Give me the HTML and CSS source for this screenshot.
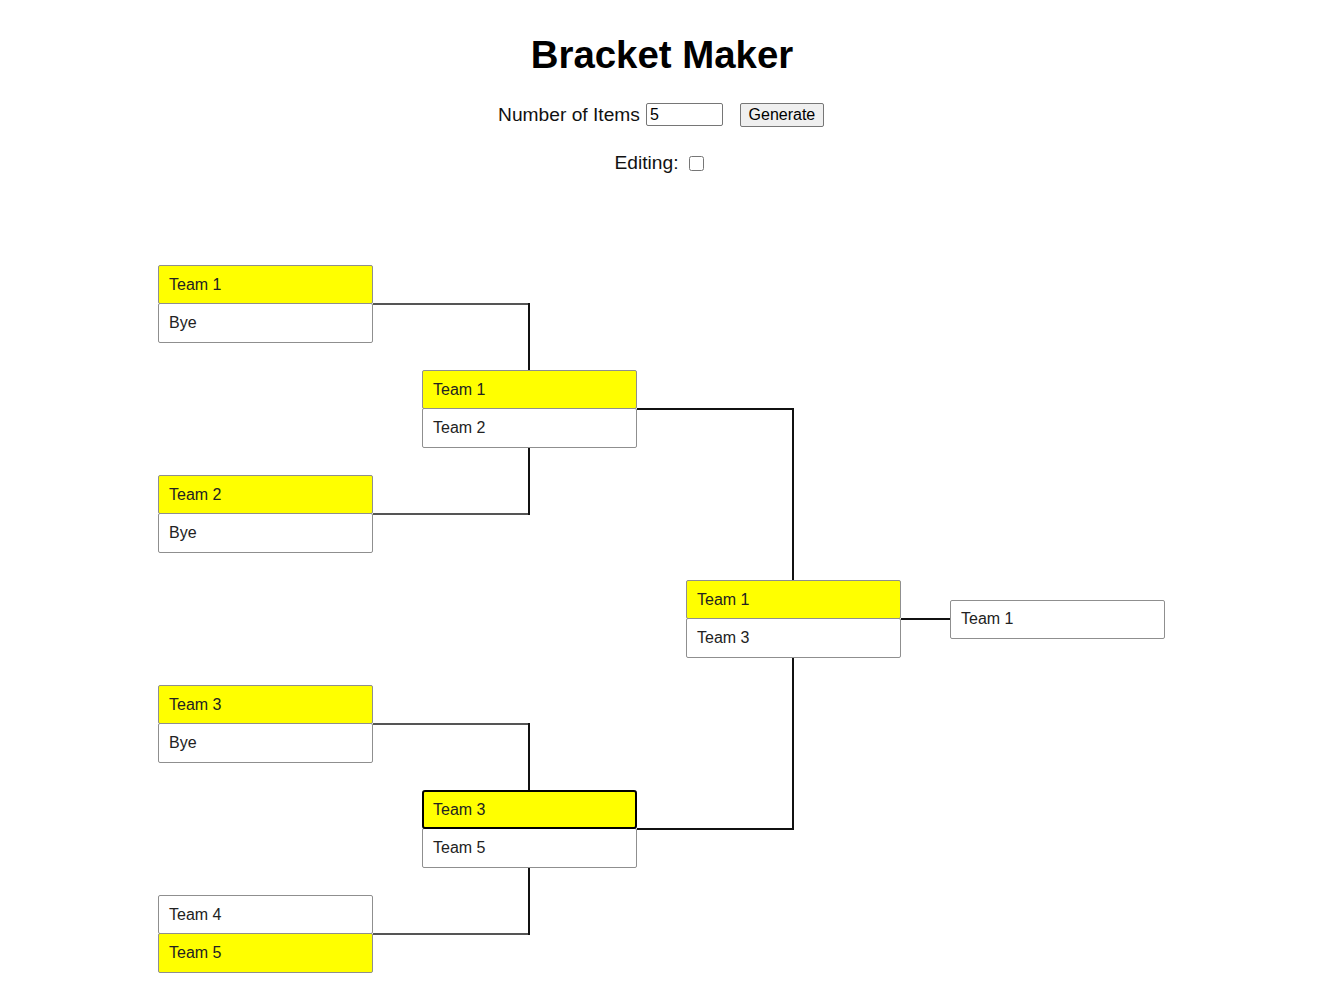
FILE: index.html
```html
<!DOCTYPE html>
<html lang="en">
<head>
<meta charset="utf-8">
<title>Bracket Maker</title>
<link rel="stylesheet" href="styles.css">
</head>
<body>
<header class="header">
  <h1 class="title">Bracket Maker</h1>
  <div class="controls">
    <label class="count-label">Number of Items <input class="count-input" type="text" value="5"></label>
    <button class="generate">Generate</button>
  </div>
  <div class="editing">
    <span>Editing:</span>
    <input class="edit-check" type="checkbox">
  </div>
</header>

<section class="bracket">
  <svg class="lines" width="1318" height="840" viewBox="0 0 1318 840">
    <g stroke="#555" stroke-width="2" fill="none" shape-rendering="crispEdges">
      <line x1="373" y1="105" x2="530" y2="105"/>
      <line x1="373" y1="315" x2="530" y2="315"/>
      <line x1="373" y1="525" x2="530" y2="525"/>
      <line x1="373" y1="735" x2="530" y2="735"/>
    </g>
    <g stroke="#111" stroke-width="2" fill="none" shape-rendering="crispEdges">
      <line x1="529" y1="104" x2="529" y2="171"/>
      <line x1="529" y1="249" x2="529" y2="316"/>
      <line x1="529" y1="524" x2="529" y2="591"/>
      <line x1="529" y1="669" x2="529" y2="736"/>
      <path d="M637 210 H793 V381"/>
      <path d="M637 630 H793 V459"/>
      <line x1="901" y1="420" x2="950" y2="420"/>
    </g>
  </svg>

  <div class="column round-1">
    <div class="cell">
      <div class="match">
        <div class="slot win">Team 1</div>
        <div class="slot">Bye</div>
      </div>
    </div>
    <div class="cell">
      <div class="match">
        <div class="slot win">Team 2</div>
        <div class="slot">Bye</div>
      </div>
    </div>
    <div class="cell">
      <div class="match">
        <div class="slot win">Team 3</div>
        <div class="slot">Bye</div>
      </div>
    </div>
    <div class="cell">
      <div class="match">
        <div class="slot">Team 4</div>
        <div class="slot win">Team 5</div>
      </div>
    </div>
  </div>

  <div class="column round-2">
    <div class="cell">
      <div class="match">
        <div class="slot win">Team 1</div>
        <div class="slot">Team 2</div>
      </div>
    </div>
    <div class="cell">
      <div class="match">
        <div class="slot win focused">Team 3</div>
        <div class="slot">Team 5</div>
      </div>
    </div>
  </div>

  <div class="column round-3">
    <div class="cell">
      <div class="match">
        <div class="slot win">Team 1</div>
        <div class="slot">Team 3</div>
      </div>
    </div>
  </div>

  <div class="column champion">
    <div class="cell">
      <div class="slot single">Team 1</div>
    </div>
  </div>
</section>
</body>
</html>
```
FILE: styles.css
```css
* {
  box-sizing: border-box;
}

html, body {
  margin: 0;
  padding: 0;
  background: #ffffff;
}

body {
  font-family: "Liberation Sans", Arial, sans-serif;
  font-size: 19.2px;
  color: #111;
  width: 1318px;
  height: 989px;
  overflow: hidden;
}

.header {
  display: flex;
  flex-direction: column;
  align-items: center;
  padding-top: 33px;
  padding-left: 6px;
}

.title {
  margin: 0;
  font-size: 38.4px;
  line-height: 44px;
  font-weight: 700;
  color: #000;
}

.controls {
  margin-top: 26px;
  display: flex;
  align-items: center;
  height: 23px;
  padding-right: 2px;
}

.count-label {
  display: flex;
  align-items: center;
  gap: 6px;
  color: #111;
}

.count-input {
  width: 77px;
  height: 23px;
  border: 1px solid #767676;
  border-radius: 2px;
  padding: 1px 3px;
  font-family: "Liberation Sans", Arial, sans-serif;
  font-size: 16px;
  color: #000;
}

.generate {
  margin-left: 17px;
  width: 84px;
  height: 24px;
  padding: 0;
  border: 1px solid #767676;
  border-radius: 2px;
  background: #efefef;
  font-family: "Liberation Sans", Arial, sans-serif;
  font-size: 16px;
  color: #000;
}

.editing {
  margin-top: 26px;
  display: flex;
  align-items: center;
  gap: 10px;
  height: 22px;
  padding-right: 6px;
}

.edit-check {
  margin: 0;
  width: 15px;
  height: 15px;
}

.bracket {
  position: relative;
  margin-top: 25px;
  display: flex;
  gap: 49px;
  padding-left: 158px;
  height: 840px;
}

.lines {
  position: absolute;
  left: 0;
  top: 0;
  z-index: 0;
}

.column {
  position: relative;
  z-index: 1;
  width: 215px;
  display: flex;
  flex-direction: column;
}

.cell {
  flex: 1;
  display: flex;
  flex-direction: column;
  justify-content: center;
}

.match {
  display: flex;
  flex-direction: column;
}

.slot {
  height: 39px;
  border: 1px solid #8f8f8f;
  border-radius: 2px;
  background: #ffffff;
  padding-left: 10px;
  display: flex;
  align-items: center;
  font-size: 16px;
  color: #222;
}

.slot + .slot {
  margin-top: -1px;
  height: 40px;
}

.slot.win {
  background: #ffff00;
}

.slot.focused {
  border: 2px solid #000;
  border-radius: 3px;
  padding-left: 9px;
  position: relative;
  z-index: 1;
}

.slot.single {
  height: 39px;
}
```
